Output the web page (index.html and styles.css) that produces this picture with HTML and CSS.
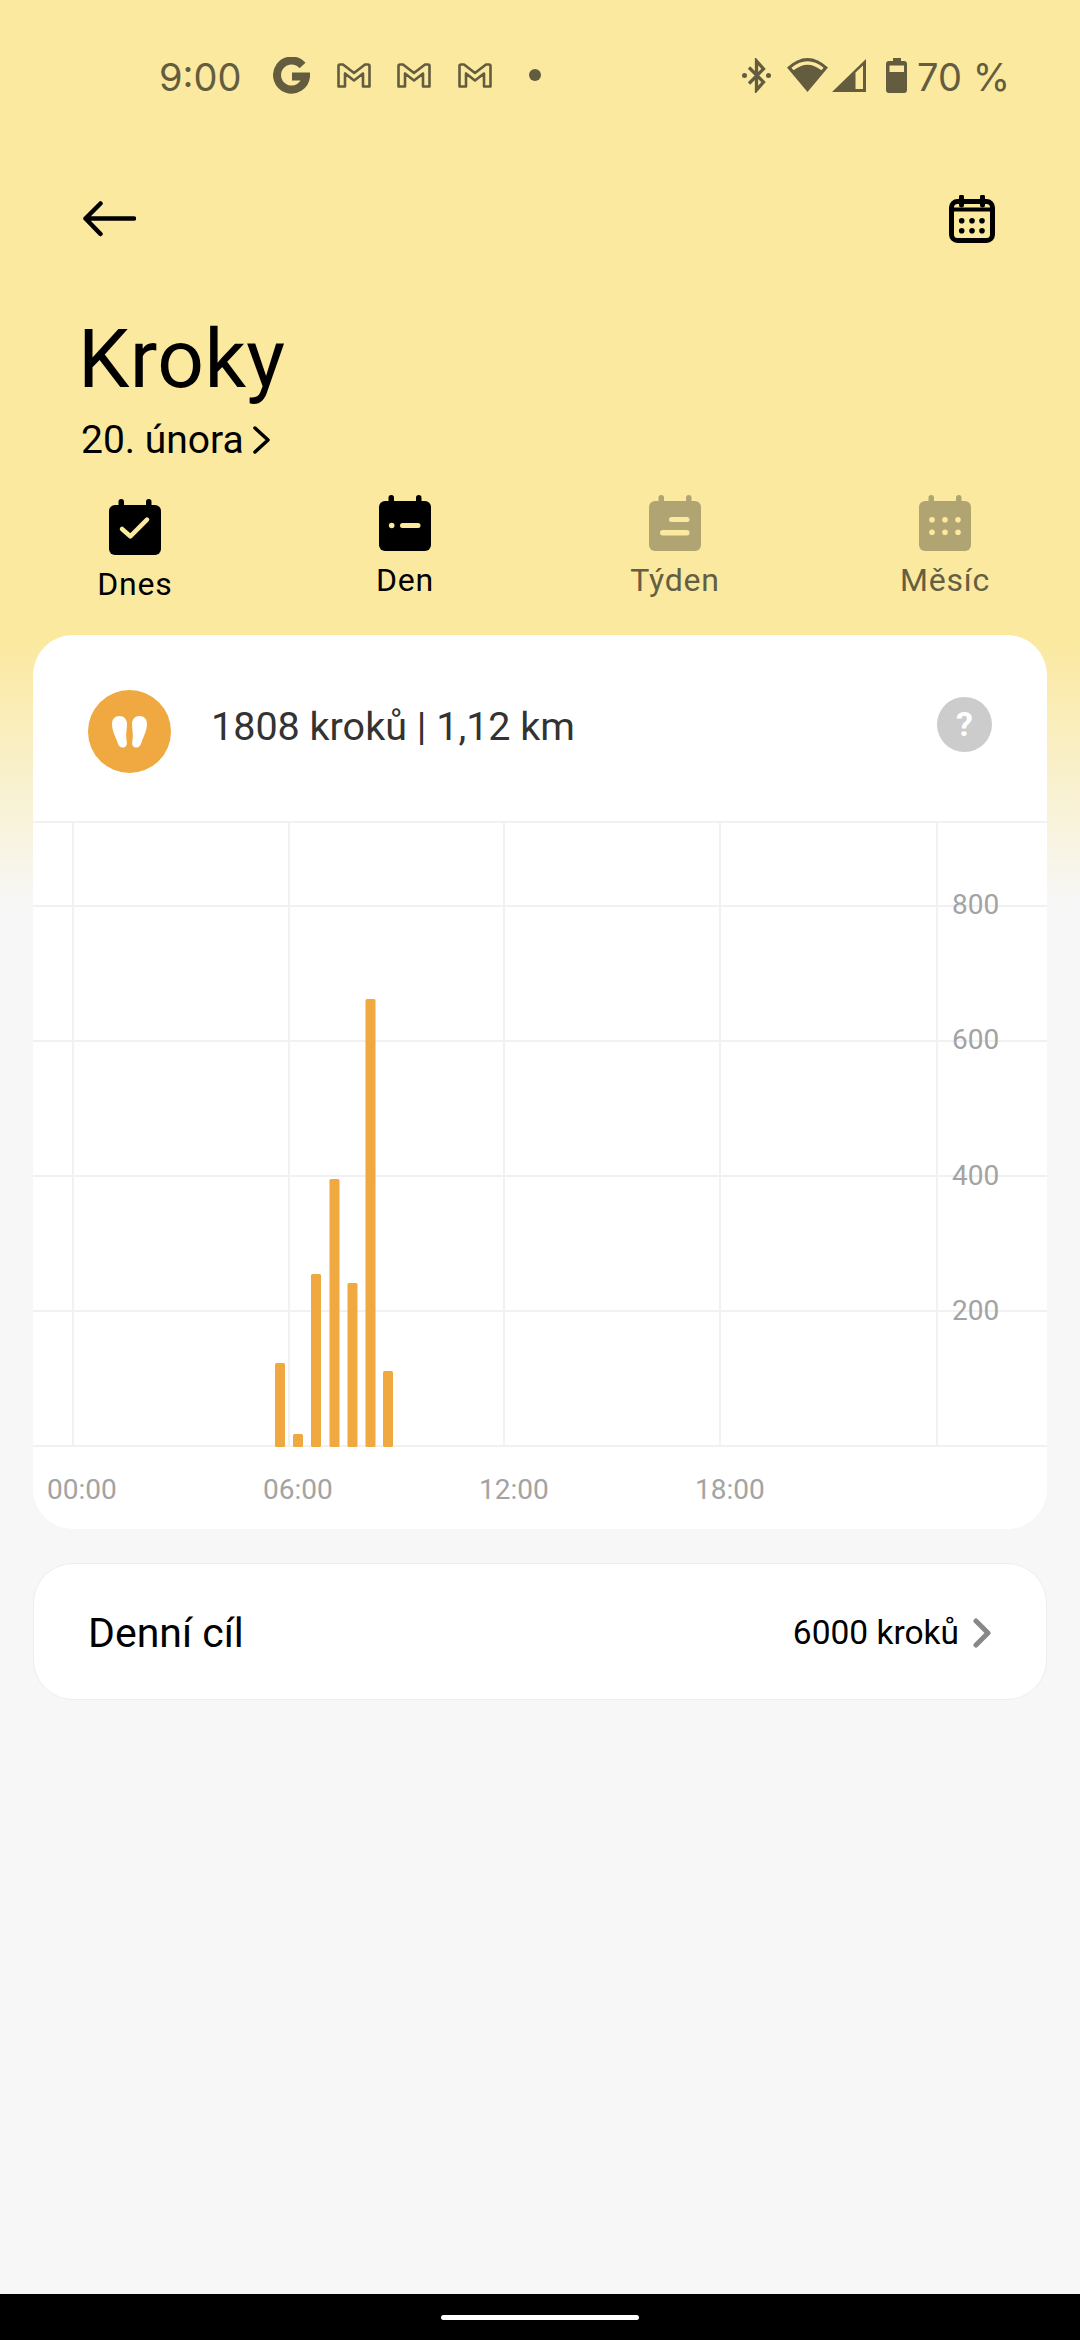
FILE: index.html
```html
<!DOCTYPE html>
<html lang="cs">
<head>
    <meta charset="UTF-8">
    <meta name="viewport" content="width=device-width, initial-scale=1.0">
    <title>Kroky</title>
    <link rel="stylesheet" href="styles.css">
</head>
<body>
    <div class="page">
        <div class="status-bar">
            <div class="status-group">
                <span class="status-time">9:00</span>
                <svg class="icon-g" width="37" height="37" viewBox="0 0 37 37"><path d="M29.5 8.5A14.5 14.5 0 1 0 33 19.5H19" fill="none" stroke="#635c3f" stroke-width="8"/></svg>
                <svg class="icon-m" width="34" height="25" viewBox="0 0 34 25"><path d="M1.5 3Q1.5 1.5 3 1.5H6L17 10 28 1.5H31Q32.5 1.5 32.5 3V23.5H26V10.5L17 17.5 8 10.5V23.5H1.5Z" fill="none" stroke="#635c3f" stroke-width="2.6" stroke-linejoin="round"/></svg>
                <svg class="icon-m" width="34" height="25" viewBox="0 0 34 25"><path d="M1.5 3Q1.5 1.5 3 1.5H6L17 10 28 1.5H31Q32.5 1.5 32.5 3V23.5H26V10.5L17 17.5 8 10.5V23.5H1.5Z" fill="none" stroke="#635c3f" stroke-width="2.6" stroke-linejoin="round"/></svg>
                <svg class="icon-m" width="34" height="25" viewBox="0 0 34 25"><path d="M1.5 3Q1.5 1.5 3 1.5H6L17 10 28 1.5H31Q32.5 1.5 32.5 3V23.5H26V10.5L17 17.5 8 10.5V23.5H1.5Z" fill="none" stroke="#635c3f" stroke-width="2.6" stroke-linejoin="round"/></svg>
                <span class="status-dot"></span>
            </div>
            <div class="status-group">
                <svg width="29" height="35" viewBox="0 0 29 35"><path d="M7 9.5 21.5 24 14.5 32V3L21.5 11 7 25.5" fill="none" stroke="#635c3f" stroke-width="3.3"/><circle cx="2.5" cy="17.5" r="2.5" fill="#635c3f"/><circle cx="26.5" cy="17.5" r="2.5" fill="#635c3f"/></svg>
                <svg class="icon-wifi" width="41" height="34" viewBox="0 0 41 34"><path d="M0 9.5Q20.5-9.5 41 9.5L20.5 34Z" fill="#635c3f"/><path d="M5.5 11Q20.5-1 35.5 11" fill="none" stroke="#fbe99f" stroke-width="3.5"/></svg>
                <svg class="icon-signal" width="34" height="33" viewBox="0 0 34 33"><path fill-rule="evenodd" d="M0 33 34 0V33ZM23.5 13.5V30H31V6.5Z" fill="#635c3f"/></svg>
                <svg class="icon-battery" width="21" height="35" viewBox="0 0 21 35"><path fill-rule="evenodd" d="M7 0H15V3H18Q21 3 21 6V32Q21 35 18 35H3Q0 35 0 32V6Q0 3 3 3H7ZM3.5 7.5V14H18V7.5Z" fill="#635c3f"/></svg>
                <span class="status-battery">70 %</span>
            </div>
        </div>

        <div class="toolbar">
            <svg width="53" height="36" viewBox="0 0 53 36"><path d="M51 17.5H2.5M17.5 2.5 2.5 17.5 17.5 33" fill="none" stroke="#000" stroke-width="4.5" stroke-linecap="round" stroke-linejoin="round"/></svg>
            <svg width="46" height="48" viewBox="0 0 46 48">
                <rect x="2.5" y="6.5" width="41" height="39" rx="6" fill="none" stroke="#000" stroke-width="5"/>
                <path d="M2.5 14.5H43.5" stroke="#000" stroke-width="4"/>
                <path d="M12.5 2V10M33.5 2V10" stroke="#000" stroke-width="5" stroke-linecap="round"/>
                <g fill="#000">
                    <circle cx="12.7" cy="25.7" r="2.8"/><circle cx="23" cy="25.7" r="2.8"/><circle cx="33" cy="25.7" r="2.8"/>
                    <circle cx="12.7" cy="35.7" r="2.8"/><circle cx="23" cy="35.7" r="2.8"/><circle cx="33" cy="35.7" r="2.8"/>
                </g>
            </svg>
        </div>

        <h1 class="title">Kroky</h1>
        <div class="date">
            <span>20. února</span>
            <svg width="17" height="28" viewBox="0 0 17 28"><path d="M2 2 15 14 2 26" fill="none" stroke="#000" stroke-width="3.5" stroke-linecap="round" stroke-linejoin="round"/></svg>
        </div>

        <div class="tabs">
            <div class="tab tab-today">
                <svg width="52" height="56" viewBox="0 0 52 56">
                    <rect y="6" width="52" height="50" rx="6" fill="#000"/>
                    <rect x="9.5" width="5.5" height="10" rx="2.7" fill="#000"/><rect x="37" width="5.5" height="10" rx="2.7" fill="#000"/>
                    <path d="M13 30 21.3 37.3 38 20.7" fill="none" stroke="#fbe99f" stroke-width="4.5" stroke-linecap="round" stroke-linejoin="round"/>
                </svg>
                <span>Dnes</span>
            </div>
            <div class="tab">
                <svg width="52" height="56" viewBox="0 0 52 56">
                    <rect y="6" width="52" height="50" rx="6" fill="#000"/>
                    <rect x="9.5" width="5.5" height="10" rx="2.7" fill="#000"/><rect x="37" width="5.5" height="10" rx="2.7" fill="#000"/>
                    <circle cx="12.7" cy="30.5" r="2.8" fill="#fbe99f"/>
                    <rect x="21" y="28" width="20.5" height="5" rx="2.5" fill="#fbe99f"/>
                </svg>
                <span>Den</span>
            </div>
            <div class="tab tab-muted">
                <svg width="52" height="56" viewBox="0 0 52 56">
                    <rect y="6" width="52" height="50" rx="6" fill="#b0a472"/>
                    <rect x="9.5" width="5.5" height="10" rx="2.7" fill="#b0a472"/><rect x="37" width="5.5" height="10" rx="2.7" fill="#b0a472"/>
                    <rect x="20" y="22" width="20.5" height="5" rx="2.5" fill="#fbe99f"/>
                    <rect x="11" y="35" width="29.5" height="5.5" rx="2.7" fill="#fbe99f"/>
                </svg>
                <span>Týden</span>
            </div>
            <div class="tab tab-muted">
                <svg width="52" height="56" viewBox="0 0 52 56">
                    <rect y="6" width="52" height="50" rx="6" fill="#b0a472"/>
                    <rect x="9.5" width="5.5" height="10" rx="2.7" fill="#b0a472"/><rect x="37" width="5.5" height="10" rx="2.7" fill="#b0a472"/>
                    <g fill="#fbe99f">
                        <circle cx="13" cy="24.7" r="2.8"/><circle cx="26" cy="24.7" r="2.8"/><circle cx="39" cy="24.7" r="2.8"/>
                        <circle cx="13" cy="37.3" r="2.8"/><circle cx="26" cy="37.3" r="2.8"/><circle cx="39" cy="37.3" r="2.8"/>
                    </g>
                </svg>
                <span>Měsíc</span>
            </div>
        </div>

        <div class="card steps-card">
            <div class="steps-header">
                <svg class="steps-badge" width="83" height="83" viewBox="0 0 83 83">
                    <circle cx="41.5" cy="41.5" r="41.5" fill="#efa940"/>
                    <path d="M24 34C24 29 27 26 31.5 26 36 26 39 29.5 39 34 39 39 37.5 44 38.5 50 39.5 55 38 57.5 34.8 57.5 32 57.5 30.5 55.5 29.5 52.5 28 47.5 24 41 24 34Z" fill="#fff"/>
                    <path d="M24 34C24 29 27 26 31.5 26 36 26 39 29.5 39 34 39 39 37.5 44 38.5 50 39.5 55 38 57.5 34.8 57.5 32 57.5 30.5 55.5 29.5 52.5 28 47.5 24 41 24 34Z" fill="#fff" transform="matrix(-1 0 0 1 83 0)"/>
                </svg>
                <span class="steps-summary">1808 kroků | 1,12 km</span>
                <span class="help-btn">?</span>
            </div>
            <div class="chart">
                <svg class="chart-plot" width="1014" height="626" viewBox="0 0 1014 626">
                    <g stroke="#f1f1f1" stroke-width="2">
                        <path d="M0 1H1014M0 85H1014M0 220H1014M0 355H1014M0 490H1014M0 625H1014"/>
                        <path d="M40 0V626M256 0V626M471 0V626M687 0V626M904 0V626"/>
                    </g>
                    <g fill="#efa940">
                        <rect x="242" y="542" width="10" height="84" rx="1.5"/>
                        <rect x="260" y="613" width="10" height="13" rx="1.5"/>
                        <rect x="278" y="453" width="10" height="173" rx="1.5"/>
                        <rect x="296.5" y="358" width="10" height="268" rx="1.5"/>
                        <rect x="314.5" y="462" width="10" height="164" rx="1.5"/>
                        <rect x="332.5" y="178" width="10" height="448" rx="1.5"/>
                        <rect x="350" y="550" width="10" height="76" rx="1.5"/>
                    </g>
                </svg>
                <div class="y-axis">
                    <span>800</span>
                    <span>600</span>
                    <span>400</span>
                    <span>200</span>
                </div>
                <div class="x-axis">
                    <span>00:00</span>
                    <span>06:00</span>
                    <span>12:00</span>
                    <span>18:00</span>
                </div>
            </div>
        </div>

        <div class="card goal-card">
            <span class="goal-label">Denní cíl</span>
            <span class="goal-value">6000 kroků</span>
            <svg width="18" height="30" viewBox="0 0 18 30"><path d="M3 3 15 15 3 27" fill="none" stroke="#888" stroke-width="5" stroke-linecap="round" stroke-linejoin="round"/></svg>
        </div>

        <div class="nav-bar"><span class="nav-pill"></span></div>
    </div>
</body>
</html>
```

FILE: styles.css
```css
html, body {
    margin: 0;
    padding: 0;
}

body {
    font-family: 'Roboto', 'Liberation Sans', sans-serif;
    color: #000;
}

svg {
    display: block;
    flex-shrink: 0;
}

.page {
    width: 1080px;
    height: 2340px;
    display: flex;
    flex-direction: column;
    overflow: hidden;
    background: linear-gradient(to bottom, #fbe99f 0, #fbe99f 640px, #f7f7f7 905px, #f7f7f7 100%);
}

/* status bar */
.status-bar {
    height: 150px;
    flex-shrink: 0;
    padding: 0 70px 0 159px;
    display: flex;
    justify-content: space-between;
    align-items: center;
    color: #635c3f;
    font-family: 'Inter', 'Roboto', sans-serif;
    font-size: 38px;
}

.status-group {
    display: flex;
    align-items: center;
}

.status-time {
    width: 81px;
    margin-top: 4px;
}

.icon-g {
    margin-left: 33px;
}

.icon-m {
    margin-left: 26.5px;
}

.status-dot {
    width: 12px;
    height: 12px;
    margin-left: 37px;
    border-radius: 50%;
    background: #635c3f;
}

.icon-wifi {
    margin-left: 16px;
}

.icon-signal {
    margin-left: 4px;
}

.icon-battery {
    margin-left: 20px;
}

.status-battery {
    margin-left: 10px;
    margin-top: 4px;
}

/* header */
.toolbar {
    height: 138px;
    flex-shrink: 0;
    padding: 0 85px 0 83px;
    display: flex;
    justify-content: space-between;
    align-items: center;
}

.title {
    margin: 23px 0 0 78px;
    font-size: 82px;
    font-weight: 400;
    line-height: 96px;
    letter-spacing: 0.4px;
}

.date {
    margin: 11px 0 0 81px;
    display: flex;
    align-items: center;
    gap: 9px;
    font-size: 39px;
    line-height: 44px;
}

/* tabs */
.tabs {
    margin-top: 33px;
    display: grid;
    grid-template-columns: repeat(4, 270px);
    align-items: start;
}

.tab {
    display: flex;
    flex-direction: column;
    align-items: center;
    gap: 10px;
    font-size: 32px;
    line-height: 38px;
    letter-spacing: 0.8px;
}

.tab-today {
    padding-top: 4px;
}

.tab-muted {
    color: #645e42;
}

/* cards */
.card {
    margin: 0 33px;
    background: #fff;
    border-radius: 40px;
}

.steps-card {
    margin-top: 32px;
    overflow: hidden;
}

.steps-header {
    height: 186px;
    box-sizing: border-box;
    padding: 55px 55px 0;
    display: flex;
    align-items: flex-start;
}

.steps-summary {
    margin-left: 40px;
    flex: 1;
    margin-top: 15px;
    font-size: 39.5px;
    line-height: 44px;
    color: #333;
}

.help-btn {
    width: 55px;
    height: 55px;
    margin-top: 7px;
    border-radius: 50%;
    background: #ccc;
    color: #fff;
    font-size: 34px;
    font-weight: 700;
    line-height: 55px;
    text-align: center;
}

/* chart */
.chart {
    position: relative;
    color: #a3a3a3;
    font-size: 28px;
}

.y-axis {
    position: absolute;
    left: 919px;
    top: 16px;
    display: flex;
    flex-direction: column;
}

.y-axis span {
    height: 135.3px;
    line-height: 135.3px;
}

.x-axis {
    padding: 26px 0 23px 14px;
    display: flex;
    line-height: 33px;
}

.x-axis span {
    width: 216px;
}

/* goal row */
.goal-card {
    margin-top: 34px;
    height: 137px;
    box-sizing: border-box;
    padding: 2px 55px 0 54px;
    border: 1px solid #eeeef0;
    display: flex;
    align-items: center;
}

.goal-label {
    flex: 1;
    font-size: 41px;
}

.goal-value {
    margin-right: 14px;
    font-size: 33.5px;
}

/* navigation bar */
.nav-bar {
    margin-top: auto;
    height: 46px;
    flex-shrink: 0;
    background: #000;
    display: flex;
    justify-content: center;
    padding-top: 21px;
    box-sizing: border-box;
}

.nav-pill {
    width: 198px;
    height: 5px;
    border-radius: 3px;
    background: #fff;
}
```
